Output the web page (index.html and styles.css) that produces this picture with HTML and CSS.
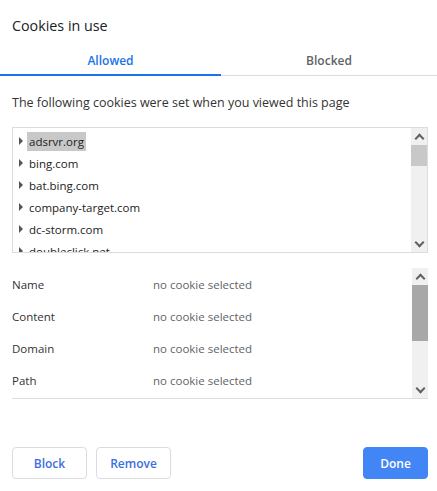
FILE: index.html
```html
<!DOCTYPE html>
<html>
<head>
<meta charset="utf-8">
<link rel="stylesheet" href="styles.css">
</head>
<body>
<div class="dialog">
  <div class="title">Cookies in use</div>
  <div class="tabs">
    <div class="tab active">Allowed</div>
    <div class="tab">Blocked</div>
  </div>
  <p class="intro">The following cookies were set when you viewed this page</p>
  <div class="tree">
    <div class="tree-list">
      <div class="row"><span class="tri"></span><span class="site selected">adsrvr.org</span></div>
      <div class="row"><span class="tri"></span><span class="site">bing.com</span></div>
      <div class="row"><span class="tri"></span><span class="site">bat.bing.com</span></div>
      <div class="row"><span class="tri"></span><span class="site">company-target.com</span></div>
      <div class="row"><span class="tri"></span><span class="site">dc-storm.com</span></div>
      <div class="row"><span class="tri"></span><span class="site">doubleclick.net</span></div>
    </div>
    <div class="sbar">
      <div class="arrow up"></div>
      <div class="thumb light"></div>
      <div class="spacer"></div>
      <div class="arrow down"></div>
    </div>
  </div>
  <div class="details">
    <div class="detail-list">
      <div class="drow"><span class="label">Name</span><span class="value">no cookie selected</span></div>
      <div class="drow"><span class="label">Content</span><span class="value">no cookie selected</span></div>
      <div class="drow"><span class="label">Domain</span><span class="value">no cookie selected</span></div>
      <div class="drow"><span class="label">Path</span><span class="value">no cookie selected</span></div>
    </div>
    <div class="sbar dsbar">
      <div class="arrow up"></div>
      <div class="thumb dark"></div>
      <div class="spacer"></div>
      <div class="arrow down"></div>
    </div>
  </div>
  <div class="buttons">
    <button class="btn">Block</button>
    <button class="btn">Remove</button>
    <div class="grow"></div>
    <button class="btn primary">Done</button>
  </div>
</div>
</body>
</html>
```
FILE: styles.css
```css
* { box-sizing: border-box; }
html, body { margin: 0; padding: 0; background: #fff; }
body {
  font-family: "Open Sans", "Noto Sans", sans-serif;
  font-size: 12px;
  color: #333;
  width: 437px;
  height: 491px;
  overflow: hidden;
}
.title {
  font-size: 14.3px;
  color: #202124;
  padding: 16px 12px 0 12px;
  height: 44px;
}
.tabs {
  display: flex;
  height: 32px;
  border-bottom: 1px solid #dadce0;
}
.tab {
  width: 50%;
  text-align: center;
  font-weight: 600;
  color: #5f6368;
  padding-top: 8px;
}
.tab.active {
  width: 221px;
  color: #1a73e8;
  border-bottom: 2px solid #1a73e8;
  margin-bottom: -1px;
}
.tab:last-child { flex: 1; }
.intro {
  margin: 0;
  padding: 18px 12px 0 12px;
  height: 51px;
  font-size: 12.5px;
}
.tree {
  margin: 0 9px 0 12px;
  height: 126px;
  border: 1px solid #dadce0;
  display: flex;
  overflow: hidden;
}
.tree-list {
  flex: 1;
  padding: 2px 0 0 6px;
  overflow: hidden;
  font-size: 11.5px;
}
.row {
  display: flex;
  align-items: center;
  height: 22px;
}
.tri {
  width: 0; height: 0;
  border-top: 4px solid transparent;
  border-bottom: 4px solid transparent;
  border-left: 4px solid #555;
  margin-right: 4px;
}
.site { padding: 2px 2px; color: #222; }
.site.selected { background: #c8c8c8; }
.sbar {
  width: 16px;
  background: #f0f0f0;
  display: flex;
  flex-direction: column;
  align-items: stretch;
}
.arrow { height: 17px; position: relative; }
.arrow::after {
  content: "";
  position: absolute;
  left: 5px;
  width: 5px; height: 5px;
  border-left: 2px solid #606060;
  border-top: 2px solid #606060;
}
.arrow.up::after { top: 7px; transform: rotate(45deg); }
.arrow.down::after { top: 4px; transform: rotate(225deg); }
.thumb { height: 21px; }
.thumb.light { background: #c8c8c8; }
.thumb.dark { background: #a8a8a8; height: 56px; }
.spacer { flex: 1; }
.details {
  margin: 15px 9px 0 12px;
  height: 131px;
  border-bottom: 1px solid #dadce0;
  display: flex;
  font-size: 11.5px;
}
.detail-list { flex: 1; padding-top: 0; }
.drow {
  display: flex;
  align-items: center;
  height: 32px;
}
.label { width: 141px; color: #333; }
.value { color: #5f6368; }
.dsbar { height: 130px; }
.buttons {
  display: flex;
  padding: 48px 9px 0 12px;
  gap: 9px;
}
.grow { flex: 1; }
.btn {
  font-family: inherit;
  font-size: 12px;
  font-weight: 600;
  height: 32px;
  width: 75px;
  border: 1px solid #dadce0;
  border-radius: 4px;
  background: #fff;
  color: #3b6fe0;
  padding: 0;
}
.btn.primary {
  width: 65px;
  background: #4285f4;
  border-color: #4285f4;
  color: #fff;
}
```
